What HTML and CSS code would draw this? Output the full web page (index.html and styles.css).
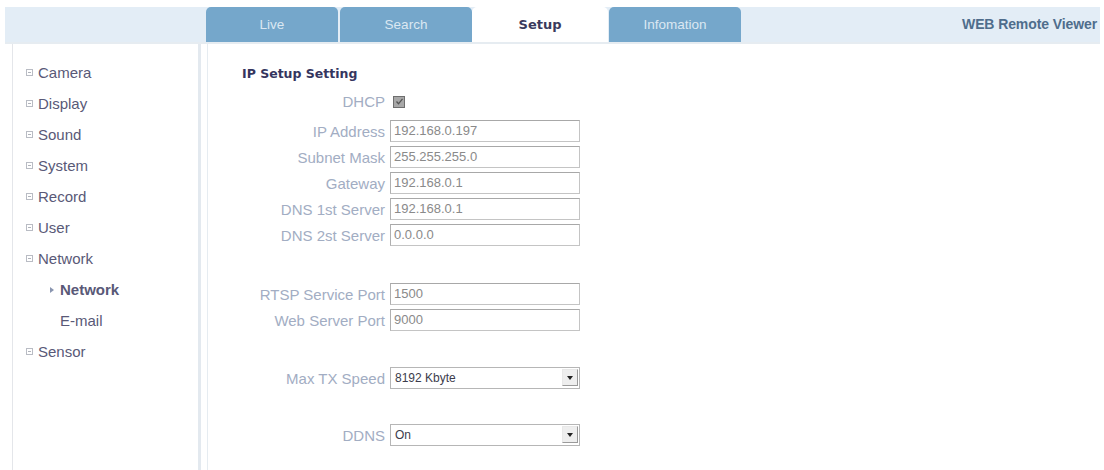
FILE: index.html
```html
<!DOCTYPE html>
<html>
<head>
<meta charset="utf-8">
<link rel="stylesheet" href="styles.css">
</head>
<body>
<div class="header">
  <div class="head-spacer"></div>
  <div class="tab">Live</div>
  <div class="tab tab-search">Search</div>
  <div class="tab tab-active">Setup</div>
  <div class="tab tab-info">Infomation</div>
  <div class="brand">WEB Remote Viewer</div>
</div>
<div class="rule"></div>
<div class="main">
  <div class="sidebar">
    <ul class="menu">
      <li class="item"><span class="plus"></span>Camera</li>
      <li class="item"><span class="plus"></span>Display</li>
      <li class="item"><span class="plus"></span>Sound</li>
      <li class="item"><span class="plus"></span>System</li>
      <li class="item"><span class="plus"></span>Record</li>
      <li class="item"><span class="plus"></span>User</li>
      <li class="item"><span class="plus"></span>Network</li>
      <li class="sub sub-active"><span class="arrow"></span>Network</li>
      <li class="sub">E-mail</li>
      <li class="item"><span class="plus"></span>Sensor</li>
    </ul>
  </div>
  <div class="content">
    <div class="title">IP Setup Setting</div>
    <div class="dhcp-row">
      <span class="label">DHCP</span>
      <span class="check"><svg width="9" height="9" viewBox="0 0 9 9"><path d="M1.5 4.5 L3.5 6.8 L7.5 1.8" fill="none" stroke="#555" stroke-width="1.3"/></svg></span>
    </div>
    <div class="group g1">
      <span class="label">IP Address</span><div class="field">192.168.0.197</div>
      <span class="label">Subnet Mask</span><div class="field">255.255.255.0</div>
      <span class="label">Gateway</span><div class="field">192.168.0.1</div>
      <span class="label">DNS 1st Server</span><div class="field">192.168.0.1</div>
      <span class="label">DNS 2st Server</span><div class="field">0.0.0.0</div>
    </div>
    <div class="group g2">
      <span class="label">RTSP Service Port</span><div class="field">1500</div>
      <span class="label">Web Server Port</span><div class="field">9000</div>
    </div>
    <div class="group g3">
      <span class="label">Max TX Speed</span>
      <div class="field select"><span class="sel-text">8192 Kbyte</span><span class="sel-btn"><svg width="6" height="4" viewBox="0 0 6 4"><path d="M0 0 H6 L3 4 Z" fill="#222"/></svg></span></div>
    </div>
    <div class="group g4">
      <span class="label">DDNS</span>
      <div class="field select"><span class="sel-text">On</span><span class="sel-btn"><svg width="6" height="4" viewBox="0 0 6 4"><path d="M0 0 H6 L3 4 Z" fill="#222"/></svg></span></div>
    </div>
  </div>
</div>
</body>
</html>
```
FILE: styles.css
```css
html, body {
  margin: 0;
  padding: 0;
  background: #ffffff;
  width: 1104px;
  height: 470px;
  overflow: hidden;
  font-family: "Liberation Sans", Arial, sans-serif;
}

.header {
  display: flex;
  margin: 7px 4px 0 5px;
  height: 35px;
  background: #e3edf6;
}

.head-spacer {
  width: 201px;
}

.tab {
  width: 132px;
  height: 35px;
  line-height: 35px;
  text-align: center;
  background: #75a7cb;
  color: #dbe8f2;
  font-size: 13.5px;
  border-radius: 5px 5px 0 0;
}

.tab-search {
  margin-left: 2px;
}

.tab-active {
  width: 136px;
  background: #ffffff;
  color: #3a3a5c;
  font-family: "DejaVu Sans", Verdana, sans-serif;
  font-weight: bold;
  font-size: 13px;
}

.tab-info {
  margin-left: 1px;
}

.brand {
  flex: 1;
  text-align: right;
  line-height: 35px;
  padding-right: 3px;
  font-size: 14px;
  font-weight: bold;
  color: #4f6d8c;
  letter-spacing: -0.1px;
}

.rule {
  height: 2px;
  margin: 0 4px 0 5px;
  background: #e6ecf1;
}

.main {
  display: flex;
  height: 426px;
}

.sidebar {
  margin-left: 12px;
  width: 185px;
  border-left: 1px solid #e4e6ea;
  border-right: 3px solid #e3e9ef;
}

.menu {
  list-style: none;
  margin: 0;
  padding: 13px 0 0 0;
}

.menu li {
  height: 31px;
  line-height: 31px;
  font-size: 15px;
  color: #595977;
  display: flex;
  align-items: center;
}

.item {
  padding-left: 13px;
}

.plus {
  display: inline-block;
  width: 5px;
  height: 5px;
  border: 1px solid #b9bcc4;
  margin-right: 5px;
  position: relative;
}

.plus::before {
  content: "";
  position: absolute;
  left: 1px;
  top: 2px;
  width: 3px;
  height: 1px;
  background: #b0b3bb;
}

.sub {
  padding-left: 47px;
}

.sub-active {
  font-weight: bold;
  color: #363664;
  padding-left: 37px;
}

.arrow {
  display: inline-block;
  width: 0;
  height: 0;
  border-left: 4px solid #8a96b0;
  border-top: 3px solid transparent;
  border-bottom: 3px solid transparent;
  margin-right: 6px;
}

.content {
  margin-left: 6px;
  border-left: 1px solid #e6ecf1;
  flex: 1;
  padding-top: 21px;
}

.title {
  margin-left: 34px;
  height: 18px;
  line-height: 18px;
  font-family: "DejaVu Sans", Verdana, sans-serif;
  font-weight: bold;
  font-size: 12.5px;
  color: #35355e;
}

.label {
  font-size: 15px;
  color: #a2adc3;
  text-align: right;
  white-space: nowrap;
}

.dhcp-row {
  display: grid;
  grid-template-columns: 177px 20px;
  column-gap: 8px;
  align-items: center;
  height: 16px;
  margin-top: 10px;
}

.check {
  width: 10px;
  height: 10px;
  border: 1px solid #6e6e6e;
  background: #a8a8a8;
  display: flex;
  align-items: center;
  justify-content: center;
}

.group {
  display: grid;
  grid-template-columns: 177px 190px;
  column-gap: 5px;
  row-gap: 4px;
  grid-auto-rows: 22px;
  align-items: center;
}

.g1 { margin-top: 11px; }
.g2 { margin-top: 37px; }
.g3 { margin-top: 36px; }
.g4 { margin-top: 35px; }

.field {
  box-sizing: border-box;
  height: 22px;
  border: 1px solid #c4c4c4;
  border-top-color: #a8a8a8;
  border-left-color: #b0b0b0;
  background: #ffffff;
  color: #8a8a8a;
  font-size: 13px;
  line-height: 20px;
  padding-left: 3px;
}

.select {
  display: flex;
  align-items: center;
  justify-content: space-between;
  padding-right: 1px;
  border-color: #b6b6b6;
}

.sel-text {
  color: #3c3c4c;
  font-size: 12px;
  padding-left: 1px;
}

.sel-btn {
  box-sizing: border-box;
  width: 16px;
  height: 17px;
  background: #eeeeee;
  border: 1px solid #9a9a9a;
  border-top-color: #e8e8e8;
  border-left-color: #e8e8e8;
  display: flex;
  align-items: center;
  justify-content: center;
  margin-top: -1px;
}
```
